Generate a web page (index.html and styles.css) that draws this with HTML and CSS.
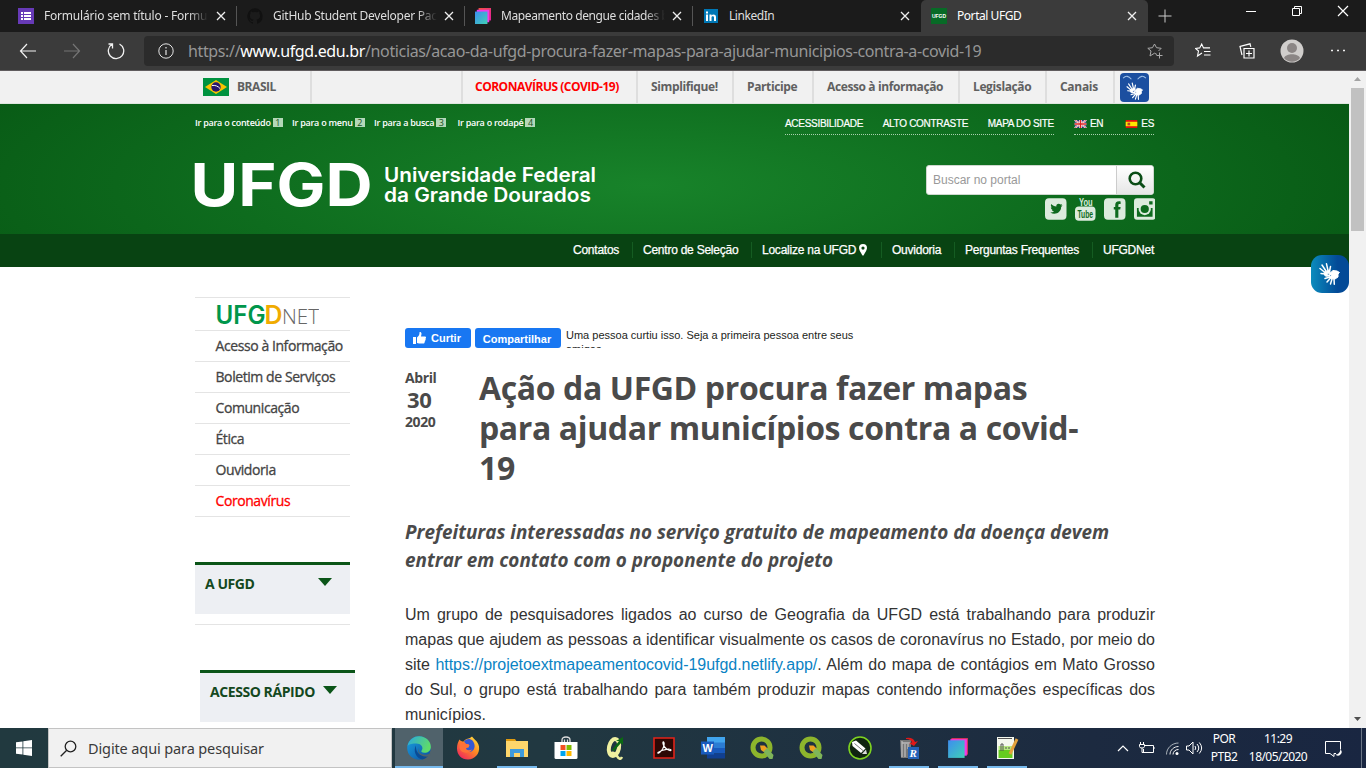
FILE: index.html
```html
<!DOCTYPE html>
<html lang="pt-BR">
<head>
<meta charset="utf-8">
<title>Portal UFGD</title>
<link rel="stylesheet" href="styles.css">
</head>
<body>
<svg class="defs" width="0" height="0">
  <defs>
    <linearGradient id="gEdge" x1="0" y1="0" x2="1" y2="0.4"><stop offset="0" stop-color="#2aa7e0"/><stop offset="1" stop-color="#5edb6a"/></linearGradient>
    <linearGradient id="gEdge2" x1="0" y1="0" x2="1" y2="1"><stop offset="0" stop-color="#1aa0e0"/><stop offset="1" stop-color="#0c4fa0"/></linearGradient>
    <linearGradient id="gFox" x1="1" y1="0" x2="0.2" y2="1"><stop offset="0" stop-color="#fff04a"/><stop offset="0.45" stop-color="#ff9021"/><stop offset="1" stop-color="#f0245f"/></linearGradient>
    <linearGradient id="gSq" x1="0" y1="0" x2="1" y2="1"><stop offset="0" stop-color="#3d8df0"/><stop offset="1" stop-color="#3fd0b5"/></linearGradient>
    <linearGradient id="gPk" x1="0" y1="0" x2="1" y2="1"><stop offset="0" stop-color="#f0503c"/><stop offset="1" stop-color="#e31fa0"/></linearGradient>
    <symbol id="squares" viewBox="0 0 20 20"><path fill="url(#gPk)" d="M5 1h14v14H5z"/><path fill="#f03bea" d="M3 3h14v14H3z"/><path fill="url(#gSq)" d="M1 5h14v14H1z"/></symbol>
    <symbol id="x" viewBox="0 0 10 10"><path d="M1 1l8 8M9 1L1 9" stroke="currentColor" stroke-width="1.3" fill="none"/></symbol>
    <symbol id="hands" viewBox="0 0 22 22"><g stroke="#fff" stroke-linecap="round" stroke-linejoin="round" fill="none"><path stroke-width="1.500" d="M6 9.500L1 5.500M7 8L3 2M9 7.500L7.500 .8M10.500 8.500L11.500 3.500M6 11L2 10.500"/><path fill="#fff" stroke-width="1" d="M5.500 9l5-2 .5 2.500-3 1.500 1 2-3-.5z"/><path fill="#fff" stroke-width="1" d="M10 11l4-3.500 4 .5 2.500 1.500-1.500 1.500v3l-3 2-4-.5-1-2 2-1.500z"/><path stroke-width="1.500" d="M11 14L6 15.500M11.500 15L8 19M13 16l-1.500 5M15 16l.3 5.200M10.500 12.500L7 13"/></g></symbol>
    <symbol id="qgis" viewBox="0 0 24 24"><circle cx="11.500" cy="11.500" r="8.500" fill="none" stroke="#8db52c" stroke-width="5"/><path d="M10 9.500l4.500 0 3.500 3.500-3.500 3.500-3.500-2.500z" fill="#f0a020"/><path d="M13.500 15.500l3.500-3.500 6.500 7-1 4h-3z" fill="#7fb55a"/></symbol>
  </defs>
</svg>

<div class="tabs">
  <div class="tab tab-first">
    <svg class="fav" viewBox="0 0 16 16"><path fill="#673ab7" d="M0 0h16v16H0z"/><path fill="#fff" d="M3 4h2v2H3zM6 4h7v2H6zM3 7h2v2H3zM6 7h7v2H6zM3 10h2v2H3zM6 10h7v2H6z"/></svg>
    <span class="tab-text fade t1">Formulário sem título - Formulários</span><svg class="close"><use href="#x"/></svg>
  </div>
  <div class="tab">
    <svg class="fav" viewBox="0 0 16 16"><path fill="#111" d="M8 .3a8 8 0 0 0-2.500 15.500c.4 0 .5-.2.5-.4v-1.500c-2.200.5-2.700-1-2.700-1-.4-.9-.9-1.200-.9-1.200-.7-.5.1-.5.1-.5.800 0 1.200.8 1.200.8.700 1.200 1.900.9 2.300.7.100-.5.300-.9.500-1.100-1.800-.2-3.600-.9-3.600-4 0-.9.300-1.600.8-2.100-.1-.2-.4-1 .1-2.100 0 0 .7-.2 2.200.8a7.500 7.500 0 0 1 4 0c1.500-1 2.200-.8 2.200-.8.400 1.100.2 1.900.1 2.100.5.500.8 1.200.8 2.100 0 3.100-1.900 3.800-3.700 4 .3.300.6.800.6 1.500v2.200c0 .2.100.5.500.4A8 8 0 0 0 8 .3z"/></svg>
    <span class="tab-text fade t2">GitHub Student Developer Pack</span><svg class="close"><use href="#x"/></svg>
  </div>
  <div class="tab">
    <svg class="fav" viewBox="1 1 18 18"><use href="#squares" width="20" height="20"/></svg>
    <span class="tab-text fade t3">Mapeamento dengue cidades brasil</span><svg class="close"><use href="#x"/></svg>
  </div>
  <div class="tab">
    <svg class="fav" viewBox="0 0 16 16"><path fill="#0077b5" d="M1 1h14v14H1z"/><path fill="#fff" d="M3 6.500h2V13H3zM3 3.500h2v2H3zM6.500 6.500h2v.9c1-1.600 4.500-1.500 4.500 1.600v4h-2V9.500c0-1.700-2.500-1.700-2.500 0V13h-2z"/></svg>
    <span class="tab-text t4">LinkedIn</span><svg class="close"><use href="#x"/></svg>
  </div>
  <div class="tab tab-active">
    <span class="fav fav-ufgd">UFGD</span>
    <span class="tab-text t5">Portal UFGD</span><svg class="close"><use href="#x"/></svg>
  </div>
  <svg class="newtab" viewBox="0 0 14 14"><path d="M7 .5v13M.5 7h13" stroke="#ccc" fill="none"/></svg>
  <div class="winbtns">
    <svg viewBox="0 0 12 12"><path d="M1 6.500h10" stroke="#fff"/></svg>
    <svg viewBox="0 0 12 12"><path d="M1.500 3.500h7v7h-7zM3.500 3V1.500h7v7H9" stroke="#fff" fill="none"/></svg>
    <svg viewBox="0 0 12 12"><path d="M1 1l10 10M11 1L1 11" stroke="#fff" stroke-width="1.200"/></svg>
  </div>
</div>

<div class="toolbar">
  <svg class="nav-ico" viewBox="0 0 18 18"><path d="M17 9H1.500M8 2L1.500 9 8 16" fill="none" stroke="#f2f2f2" stroke-width="1.200"/></svg>
  <svg class="nav-ico" viewBox="0 0 18 18"><path d="M1 9h15.500M10 2l6.500 7L10 16" fill="none" stroke="#757575" stroke-width="1.200"/></svg>
  <svg class="nav-ico" viewBox="0 0 18 18"><path d="M12.500 2A7.700 7.700 0 1 1 5 2.300M5.500 6.500V2H1.500" fill="none" stroke="#f2f2f2" stroke-width="1.300"/></svg>
  <div class="address">
    <svg class="info" viewBox="0 0 16 16"><circle cx="8" cy="8" r="7.200" fill="none" stroke="#e5e5e5"/><path d="M8 7v5M8 4v1.500" stroke="#e5e5e5" stroke-width="1.200"/></svg>
    <span class="url">https://<b>www.ufgd.edu.br</b>/noticias/acao-da-ufgd-procura-fazer-mapas-para-ajudar-municipios-contra-a-covid-19</span>
    <svg class="star" viewBox="0 0 16 16"><path d="M10 11.500l-2.500-1.300L3 13l1-5L.8 5.300l4.700-.6L7.500 1l2 3.700 4.700.6L11.500 8M12.500 9.500v6M9.500 12.500h6" fill="none" stroke="#aaa"/></svg>
  </div>
  <svg class="tool fav-list" viewBox="0 0 16 16"><path d="M7 10l-4.500 3 1-5L.5 5.500l4.200-.6L6.700 1l1.800 3.900H15M9 8.500h6.500M9 12h6.500" fill="none" stroke="#fff" stroke-width="1.100"/></svg>
  <svg class="tool" viewBox="0 0 16 16"><path d="M5 5.500h10v9.500H5zM10 7.500v6M7 10.500h6M3 12L1 3.500 11 .8l.8 3" fill="none" stroke="#fff" stroke-width="1.200"/></svg>
  <svg class="avatar" viewBox="0 0 24 24"><circle cx="12" cy="12" r="11.500" fill="#d0cecc"/><circle cx="12" cy="9" r="5" fill="#8b8685"/><path d="M4 19c2-5 14-5 16 0-4 5-12 5-16 0z" fill="#8b8685"/></svg>
  <svg class="tool dots" viewBox="0 0 16 16"><path d="M1 7.500h2M7 7.500h2M13 7.500h2" stroke="#eee" stroke-width="1.600"/></svg>
</div>

<div class="viewport">
  <div class="page">
    <div class="gov">
      <div class="gov-in">
        <div class="brasil">
          <svg viewBox="0 0 26 18"><path fill="#00923f" d="M0 0h26v18H0z"/><path fill="#f8c300" d="M13 2l11 7-11 7L2 9z"/><circle cx="13" cy="9" r="4.700" fill="#28166f"/><path d="M9 7.500c3-.5 6 .5 8 3" stroke="#fff" fill="none"/></svg>
          <b>BRASIL</b>
        </div>
        <div class="gov-gap"></div>
        <div class="gov-item covid">CORONAVÍRUS (COVID-19)</div>
        <div class="gov-item g2">Simplifique!</div>
        <div class="gov-item g3">Participe</div>
        <div class="gov-item g4">Acesso à informação</div>
        <div class="gov-item g5">Legislação</div>
        <div class="gov-item g6">Canais</div>
        <div class="vlibras"><svg viewBox="0 0 28 28"><path d="M3 5q4-4 8 1M25 5q-4-4-8 1" stroke="#9fc0e8" fill="none"/><use href="#hands" x="6" y="9" width="17" height="17"/></svg></div>
      </div>
    </div>

    <header>
      <div class="wrap head-top">
        <div class="skips">
          <span class="s1">Ir para o conteúdo <i>1</i></span><span class="s2">Ir para o menu <i>2</i></span><span class="s3">Ir para a busca <i>3</i></span><span>Ir para o rodapé <i>4</i></span>
        </div>
        <div class="access">
          <div class="dotted"><span>ACESSIBILIDADE</span><span>ALTO CONTRASTE</span><span>MAPA DO SITE</span></div>
          <div class="dotted langs">
            <svg viewBox="0 0 13 9"><path fill="#29357c" d="M0 0h13v9H0z"/><path d="M0 0l13 9M13 0L0 9" stroke="#fff" stroke-width="2"/><path d="M0 0l13 9M13 0L0 9" stroke="#d22" stroke-width=".7"/><path d="M6.500 0v9M0 4.500h13" stroke="#fff" stroke-width="3"/><path d="M6.500 0v9M0 4.500h13" stroke="#d22" stroke-width="1.600"/></svg><span class="en">EN</span>
            <svg viewBox="0 0 13 9"><path fill="#e01010" d="M0 0h13v9H0z"/><path fill="#ffe600" d="M0 2h13v5H0z"/><path fill="#b5452c" d="M2 3h3v3H2z"/></svg><span>ES</span>
          </div>
        </div>
      </div>
      <div class="wrap head-main">
        <svg class="logo" width="402" height="48" viewBox="0 0 402 48">
          <text class="logo-u" x="-4.500" y="44" textLength="182" lengthAdjust="spacingAndGlyphs">UFGD</text>
          <text class="logo-t" x="189" y="19.500" textLength="212" lengthAdjust="spacingAndGlyphs">Universidade Federal</text>
          <text class="logo-t" x="189" y="40" textLength="207" lengthAdjust="spacingAndGlyphs">da Grande Dourados</text>
        </svg>
        <div class="head-right">
          <div class="search"><span>Buscar no portal</span><div class="sbtn"><svg viewBox="0 0 18 18"><circle cx="7.500" cy="7.500" r="5.800" fill="none" stroke="#0b4d17" stroke-width="2.600"/><path d="M11.500 11.500l5 5" stroke="#0b4d17" stroke-width="3"/></svg></div></div>
          <div class="social">
            <svg viewBox="0 0 22 22"><rect width="22" height="22" rx="4" fill="#dcebdd"/><path fill="#0e6a1e" d="M16.500 7.300l1-1.500-1.600.6c-2-1.800-4.800-.3-4.300 2-2 0-3.900-1-5.200-2.600-.8 1.400-.3 2.800.8 3.600l-1.200-.3c0 1.300.9 2.300 2.100 2.700H7c.4 1 1.300 1.600 2.300 1.700-1.100.9-2.500 1.200-3.900 1.100 5.100 3.100 11.200-.2 11.100-5.700l1.500-1.600z"/></svg>
            <svg class="yt" viewBox="0 0 22 25"><rect x="0" y="10.500" width="21" height="14.500" rx="4" fill="#dcebdd"/><text class="yt-you" x="4" y="9.500" textLength="14" lengthAdjust="spacingAndGlyphs">You</text><text class="yt-tube" x="2.500" y="22" textLength="16" lengthAdjust="spacingAndGlyphs">Tube</text></svg>
            <svg viewBox="0 0 22 22"><rect width="22" height="22" rx="4" fill="#dcebdd"/><path fill="#0e6a1e" d="M11.500 20v-8.500H10V9h1.500V7c0-3 1.500-4.300 5.500-3.800V6c-1.800-.2-2.300 0-2.300 1.300V9H17l-.4 2.500h-1.900V20z"/></svg>
            <svg viewBox="0 0 22 22"><rect width="22" height="22" rx="3" fill="#dcebdd"/><path fill="#0e6a1e" d="M15.500 3H19v3.500h-3.500zM3 10h16v9H3z"/><circle cx="11" cy="11" r="6.300" fill="#dcebdd"/><circle cx="11" cy="11" r="4.200" fill="#0e6a1e"/></svg>
          </div>
        </div>
      </div>
      <div class="menu"><div class="wrap menu-in">
        <span class="m1">Contatos</span><span class="m2">Centro de Seleção</span><span class="m3">Localize na UFGD <svg viewBox="0 0 8 12"><path fill="#fff" fill-rule="evenodd" d="M4 0a4 4 0 0 1 4 4c0 2-2.500 6-4 8-1.500-2-4-6-4-8a4 4 0 0 1 4-4zm0 2.500a1.600 1.600 0 1 0 0 3.200 1.600 1.600 0 0 0 0-3.200z"/></svg></span><span class="m4">Ouvidoria</span><span class="m5">Perguntas Frequentes</span><span class="m6">UFGDNet</span>
      </div></div>
    </header>

    <div class="wrap content">
      <aside>
        <ul>
          <li class="net"><svg width="103" height="21" viewBox="0 0 103 21"><text class="net-b" x="-.5" y="18.500" textLength="50" lengthAdjust="spacingAndGlyphs" fill="#00964b">UFG</text><text class="net-b" x="48.500" y="18.500" textLength="18" lengthAdjust="spacingAndGlyphs" fill="#f0ab00">D</text><text class="net-t" x="66" y="18.500" textLength="37" lengthAdjust="spacingAndGlyphs">NET</text></svg></li>
          <li>Acesso à Informação</li><li>Boletim de Serviços</li><li>Comunicação</li><li>Ética</li><li>Ouvidoria</li><li class="red">Coronavírus</li>
        </ul>
        <div class="box"><span>A UFGD</span><i class="tri tri-a"></i></div>
        <div class="rule"></div>
        <div class="box box-b"><span>ACESSO RÁPIDO</span><i class="tri"></i></div>
      </aside>
      <main>
        <div class="fb">
          <span class="fb-btn like"><svg viewBox="0 0 13 12"><path fill="#fff" d="M0 5h3v7H0zM4 5.500C6 4 6.500 2.500 6.500.5c0-.8 2.200-.5 2 1.500L8 4.500h4c1.200 0 1.300 1.500.5 2 .5.700.2 1.500-.3 1.800.3.700 0 1.300-.6 1.500.2 1-.3 1.700-1.300 1.700H6L4 11z"/></svg>Curtir</span>
          <span class="fb-btn share">Compartilhar</span>
          <span class="fb-text">Uma pessoa curtiu isso. Seja a primeira pessoa entre seus amigos.</span>
        </div>
        <div class="title">
          <div class="date"><div>Abril</div><div class="day">30</div><div class="year">2020</div></div>
          <h1>Ação da UFGD procura fazer mapas<br>para ajudar municípios contra a covid-<br>19</h1>
        </div>
        <h2>Prefeituras interessadas no serviço gratuito de mapeamento da doença devem<br>entrar em contato com o proponente do projeto</h2>
        <p>Um grupo de pesquisadores ligados ao curso de Geografia da UFGD está trabalhando para produzir mapas que ajudem as pessoas a identificar visualmente os casos de coronavírus no Estado, por meio do site <a>https://projetoextmapeamentocovid-19ufgd.netlify.app/</a>. Além do mapa de contágios em Mato Grosso do Sul, o grupo está trabalhando para também produzir mapas contendo informações específicas dos municípios.</p>
      </main>
    </div>
    <div class="float-libras"><svg viewBox="0 0 22 22"><use href="#hands" width="22" height="22"/></svg></div>
  </div>
  <div class="scroll">
    <svg viewBox="0 0 17 16"><path fill="#a3a3a3" d="M5 10l3.500-4 3.500 4z"/></svg>
    <div class="thumb"></div>
    <svg class="down" viewBox="0 0 17 16"><path fill="#505050" d="M5 5h7L8.500 9z"/></svg>
  </div>
</div>

<div class="taskbar">
  <div class="start"><svg viewBox="0 0 16 16"><path fill="#fff" d="M0 2.300l6.500-.9v6.100H0zM7.300 1.300L16 0v7.500H7.300zM0 8.300h6.500v6.200L0 13.700zM7.300 8.300H16V16l-8.700-1.300z"/></svg></div>
  <div class="tsearch"><svg viewBox="0 0 17 17"><circle cx="10.500" cy="6.500" r="5.300" fill="none" stroke="#222" stroke-width="1.300"/><path d="M6.700 10.300L.7 16.300" stroke="#222" stroke-width="1.300"/></svg><span>Digite aqui para pesquisar</span></div>
  <div class="apps">
    <div class="app on"><svg viewBox="0 0 24 24"><circle cx="12" cy="12" r="11.800" fill="url(#gEdge2)"/><path fill="url(#gEdge)" d="M.5 10C2 3.500 7 .2 12 .2 19 .2 24 5.500 23.900 11c-.1 4-3.400 6-6.500 5.800-2.700-.1-3.400-1.100-3-1.800 3-4-1-7.500-4.900-7.500C6 7.500 2 8 .5 10z"/><path fill="#0b4b94" d="M9 9.500c-3 5-.5 12.500 6.500 14 3-.9 5.400-2.800 6.800-5.300-6 3-14 1-13.300-8.700z"/><path fill="#50626b" d="M11.500 11.500c-1.500 5 4 9 10.500 6.500 1.500-.5 2 .3.500 2-.5.500-3 .8-4.500.6-5-.6-8.500-4.600-6.500-9.100z"/></svg></div>
    <div class="app"><svg viewBox="0 0 24 24"><path fill="url(#gFox)" d="M3.500 3.500C4.500 5 6 5.500 7.500 5.500 9 3 12 2.500 14 2c1.500-1.500 2-1.500 2.500-1 1 2 5.500 4 6.500 9.500C24 18 18.500 23.500 12 23.500 5.500 23.500 1 19 1 12.500 1 8.500 2 6 3.500 3.500z"/><path fill="#3459d4" d="M8 5.500c2-3 6-3.500 8.500-1 3 3.500 3 9-1 11-4 1.500-7-1-7.500-3l4.500-1 1-2.500-3.500-.5z"/><path fill="#ff7139" d="M4 7c3-1.500 5-.5 6 1 2 0 3.500 0 3 1.500l-3 2c0 3.500 3.500 3 6 2-1.500 4-11.500 5-12.500-2z"/></svg></div>
    <div class="app open"><svg viewBox="0 0 24 24"><path fill="#e09b10" d="M1 3h9l2 3H1z"/><path fill="#ffd66b" d="M1 5h22v16H1z"/><path fill="#3f9bdc" d="M5 13h14v8h-4v-4H9v4H5z"/></svg></div>
    <div class="app"><svg viewBox="0 0 24 24"><path d="M8 7V4q0-3 4-3t4 3v3M10.500 7V3.500M13.500 7V3.500" stroke="#ddd" fill="none" stroke-width="1.300"/><path fill="#fff" d="M.5 6h23v15.500q0 1.500-1.500 1.500H2q-1.500 0-1.500-1.500z"/><path fill="#f25022" d="M6.500 9h5v5h-5z"/><path fill="#7fba00" d="M12.500 9h5v5h-5z"/><path fill="#00a4ef" d="M6.500 15h5v5h-5z"/><path fill="#ffb900" d="M12.500 15h5v5h-5z"/></svg></div>
    <div class="app"><svg viewBox="0 0 24 24"><ellipse cx="11" cy="11.500" rx="5" ry="8.500" transform="rotate(12 11 11.500)" fill="none" stroke="#eff0a0" stroke-width="4"/><path d="M7 18q4-3 7 2t5 1" stroke="#eff0a0" stroke-width="2.500" fill="none"/><path d="M9 14l7-9-3 0 7-4v8l-2-2-7 8z" fill="#0b6a12"/></svg></div>
    <div class="app"><svg viewBox="0 0 24 24"><path fill="#2d0805" stroke="#e2231a" stroke-width="1.600" d="M2 2h20v20H2z"/><path d="M6 16.500c-1 2.500 5-2 6-7 .8-4-1.500-5-1-2 .8 5 7.500 8.500 8 6.500.2-1.500-8-1-13 2.500z" stroke="#fff" stroke-width="1.200" fill="none"/></svg></div>
    <div class="app"><svg viewBox="0 0 24 24"><path fill="#41a5ee" d="M6 1h18v6H6z"/><path fill="#2b7cd3" d="M6 6.500h18V12H6z"/><path fill="#185abd" d="M6 12h18v5.500H6z"/><path fill="#103f91" d="M6 17.500h18v5H6z"/><path fill="#185abd" d="M0 5.500h13v13H0z"/><text class="wordw" x="1.500" y="16">W</text></svg></div>
    <div class="app"><svg><use href="#qgis"/></svg></div>
    <div class="app"><svg><use href="#qgis"/></svg></div>
    <div class="app"><svg viewBox="0 0 24 24"><circle cx="12" cy="12" r="11" fill="#102410" stroke="#7ed321" stroke-width="1.600"/><path fill="#fff" d="M4 6l4-1.500 9.500 8-4.500 4.500L4.500 10z"/><path fill="#ddd" d="M18 13.500l1 4.500-5 0z"/><path d="M6.500 7.500l9 7.500" stroke="#777"/></svg></div>
    <div class="app open"><svg viewBox="0 0 24 24"><path fill="#777" d="M3 4h11v18H4z"/><path d="M5 7h8M5 5v16M8 8v13M11 8v5" stroke="#bbb" stroke-width="1.300"/><path fill="#2563b8" d="M11 11h11v12H11z"/><path d="M9 2q7-1 9 4l3-1-4 5-5-3 3-.5Q14 3 9 3z" fill="#e01818"/><text class="rr" x="12.500" y="20.500">R</text></svg></div>
    <div class="app open"><svg class="sq" viewBox="0 0 20 20"><path fill="#e6355f" d="M4 1h15v15H4z"/><path fill="#f03bea" d="M3 2h15v15H3z"/><path fill="url(#gSq)" d="M1 3h15v16H1z"/></svg></div>
    <div class="app open"><svg viewBox="0 0 24 24"><path fill="#f5f8ef" d="M2 1h17v22H2z"/><path fill="#65cc20" d="M3.500 14h14v8h-14z"/><path fill="#b7ea80" d="M3.500 10h14v4h-14z"/><path d="M3 2.500h14M6 8v7M8 8v7M6 8h2M10 12h2M13 12h2" stroke="#555" fill="none"/><path d="M22 3l-7 15" stroke="#e4a23c" stroke-width="3"/></svg></div>
  </div>
  <div class="tray">
    <svg class="chev" viewBox="0 0 12 8"><path d="M1 7l5-5 5 5" stroke="#fff" stroke-width="1.200" fill="none"/></svg>
    <svg class="bat" viewBox="0 0 16 14"><path d="M6 4.500h8.500v7H4.500V8M14.500 7H16M1.500 1v2M4.500 1v2M.5 3.500h5v2q0 1.500-2.500 1.500t-2.500-1.500zM3 7v4.500h2" stroke="#fff" fill="none"/></svg>
    <svg class="wifi" viewBox="0 0 13 13"><g fill="none" stroke="#aab2ba"><path d="M.5 12.500C.5 6 6 1 12.500 1"/><path d="M4 12.500C4 8 8 4.500 12.500 4.500" stroke="#eee"/><path d="M7 12.500C7 9.500 9.500 7.500 12.500 7.500" stroke="#fff"/></g><circle cx="11" cy="11.500" r="1.500" fill="#fff"/></svg>
    <svg class="vol" viewBox="0 0 17 14"><path d="M.5 5h2.500l4-4v12l-4-4H.5zM9 5q1.500 2 0 4M11 3q3.500 4 0 8M13.300 1.500q4.700 5.500 0 11" stroke="#fff" fill="none"/></svg>
    <div class="lang"><span>POR</span><span>PTB2</span></div>
    <div class="clock"><span>11:29</span><span>18/05/2020</span></div>
    <svg class="note" viewBox="0 0 17 17"><path d="M5 13.500H.5V1.500h15v8M5 13.500l4 3v-3h2" stroke="#fff" fill="none"/><path fill="#fff" d="M15.500 9.500a3.500 3.500 0 1 1-5 5q4 0 5-5z"/></svg>
    <div class="peek"></div>
  </div>
</div>
</body>
</html>
```
FILE: styles.css
```css
* { box-sizing: border-box; }
body { margin: 0; width: 1366px; height: 768px; overflow: hidden; display: flex; flex-direction: column; background: #fff; font-family: "Open Sans", sans-serif; }
svg { display: block; flex: none; }
.defs { position: absolute; }

/* Browser tabs */
.tabs { height: 32px; background: #1b1b1b; display: flex; flex: none; color: #dedede; font-family: "Noto Sans", sans-serif; font-size: 12px; }
.tab { width: 228px; height: 32px; display: flex; align-items: center; padding: 0 11px 0 10px; position: relative; }
.tab-first { width: 237px; padding-left: 18px; }
.tab:not(.tab-active)::after { content: ""; position: absolute; right: 0; top: 6px; width: 1px; height: 20px; background: #555; }
.tab:nth-child(4)::after { display: none; }
.tab-active { width: 227px; background: #3b3b3b; border-radius: 5px 5px 0 0; color: #fff; }
.fav { width: 16px; height: 16px; flex: none; }
.fav-ufgd { background: #076a26; font: bold 5px/16px "Liberation Sans", sans-serif; text-align: center; }
.tab-text { margin-left: 10px; width: 164px; white-space: nowrap; overflow: hidden; line-height: 18px; flex: none; }
.fade { -webkit-mask-image: linear-gradient(90deg, #000 88%, transparent); mask-image: linear-gradient(90deg, #000 88%, transparent); }
.t1 { letter-spacing: -.2px; }
.t2 { letter-spacing: -.25px; }
.t3 { letter-spacing: -.4px; }
.t4, .t5 { letter-spacing: -.45px; }
.close { width: 10px; height: 10px; margin-left: auto; color: #eee; }
.newtab { width: 14px; height: 14px; margin: 9px 0 0 10px; }
.winbtns { margin-left: auto; display: flex; gap: 34px; padding: 5px 17px 0 0; }
.winbtns svg { width: 12px; height: 12px; }

/* Address bar */
.toolbar { height: 39px; background: #3b3b3b; border-bottom: 1px solid #605c5e; display: flex; align-items: center; flex: none; padding-left: 19px; }
.nav-ico { width: 18px; height: 18px; margin-right: 26px; }
.address { width: 1030px; height: 30px; margin-left: -7px; background: #2b2b2b; border-radius: 4px; display: flex; align-items: center; padding: 0 11px 0 14px; }
.info { width: 16px; height: 16px; }
.url { font: 16px/24px "Noto Sans", sans-serif; color: #969696; margin-left: 14px; letter-spacing: -.365px; white-space: nowrap; }
.url b { font-weight: 400; color: #fff; }
.star { width: 16px; height: 16px; margin-left: auto; }
.tool { width: 16px; height: 16px; margin-left: 28px; }
.fav-list { margin-left: 21px; }
.avatar { width: 24px; height: 24px; margin-left: 25px; }
.dots { margin-left: 26px; }

/* Page area */
.viewport { height: 657px; display: flex; flex: none; }
.page { width: 1349px; height: 657px; overflow: hidden; position: relative; }
.wrap { width: 960px; margin-left: 195px; }
.gov { height: 33px; background: #f1f1f1; border-bottom: 1px solid #dfe6df; }
.gov-in { margin-left: 203px; display: flex; height: 32px; font-size: 12px; line-height: 32px; color: #606060; letter-spacing: -.15px; }
.brasil { width: 109px; border-right: 2px solid #dedede; display: flex; align-items: center; gap: 8px; }
.brasil svg { width: 26px; height: 18px; }
.brasil b { font-weight: 700; letter-spacing: -.45px; }
.gov-gap { width: 149px; }
.gov-item { border-left: 2px solid #dedede; padding-left: 13px; white-space: nowrap; font-weight: 700; letter-spacing: -.38px; }
.covid { color: #f00; width: 175px; font-weight: 700; letter-spacing: -.5px; padding-left: 12px; }
.g2 { width: 96px; } .g3 { width: 80px; } .g4 { width: 146px; } .g5 { width: 87px; } .g6 { width: 68px; letter-spacing: -.3px; }
.vlibras { border-left: 2px solid #dedede; padding: 2px 0 0 5px; }
.vlibras svg { width: 29px; height: 29px; background: #1c4fa0; border-radius: 4px; }

header { height: 163px; background: radial-gradient(ellipse 760px 190px at 48% 50%, #18832a 0, #0e6c1e 55%, #085a15 100%); display: flex; flex-direction: column; }
.head-top { display: flex; justify-content: space-between; height: 58px; padding-top: 12px; color: #fff; }
.skips { display: flex; height: 13px; font-size: 9px; line-height: 13px; letter-spacing: -.26px; font-weight: 600; }
.skips span { display: flex; align-items: center; gap: 2px; white-space: nowrap; }
.s1 { width: 97px; } .s2 { width: 82px; } .s3 { width: 83.500px; }
.skips i { font-style: normal; font-weight: 400; width: 10px; height: 9px; line-height: 9px; background: #b4d8b8; color: #174f20; text-align: center; }
.access { display: flex; gap: 20px; font: 10px/15px "Liberation Sans", sans-serif; letter-spacing: -.3px; white-space: nowrap; margin-right: 1px; -webkit-text-stroke: .2px #fff; }
.dotted { display: flex; height: 19px; border-bottom: 1px dotted #a9d0ad; width: 269px; justify-content: space-between; }
.langs { width: 80px; justify-content: flex-start; align-items: center; padding-bottom: 3px; gap: 3px; }
.langs svg { width: 13px; height: 8px; }
.en { margin-right: 19px; }
.head-main { display: flex; justify-content: space-between; height: 72px; }
.logo { overflow: visible; }
.logo-u { font: bold 59px Inter, sans-serif; fill: #fff; }
.logo-t { font: 600 20px Inter, sans-serif; fill: #fff; }
.head-right { width: 229px; padding-top: 3px; }
.search { width: 228px; height: 30px; background: #fff; border-radius: 3px; border: 1px solid #cfd8cf; display: flex; font: 12px/28px "Liberation Sans", sans-serif; color: #999; padding-left: 6px; justify-content: space-between; overflow: hidden; }
.sbtn { width: 37px; border-left: 1px solid #ccc; background: linear-gradient(#fff, #e6e6e6); padding: 5px 0 0 11px; }
.sbtn svg { width: 18px; height: 18px; }
.social { display: flex; justify-content: flex-end; align-items: center; gap: 8px; width: 229px; margin-top: 1px; height: 25px; }
.social svg { width: 21.500px; height: 22px; }
.social .yt { width: 21.500px; height: 25px; }
.yt-you { font: bold 12px "Liberation Sans", sans-serif; fill: #dcebdd; }
.yt-tube { font: bold 12px "Liberation Sans", sans-serif; fill: #0e6a1e; }
.menu { height: 33px; background: #084312; }
.menu-in { display: flex; justify-content: flex-end; align-items: center; height: 32px; color: #fff; font: 12px/16px "Liberation Sans", sans-serif; letter-spacing: -.24px; white-space: nowrap; }
.menu-in span { border-left: 1px solid #155c22; padding-left: 10px; display: flex; align-items: center; gap: 3px; -webkit-text-stroke: .25px #fff; }
.menu-in .m1 { width: 59px; border: 0; padding: 0; }
.m2 { width: 119px; } .m3 { width: 130px; } .m4 { width: 73px; } .m5 { width: 138px; } .m6 { width: 63px; }
.menu-in svg { width: 8px; height: 12px; }

/* Sidebar */
.content { display: flex; padding-top: 30px; }
aside { width: 160px; }
ul { list-style: none; margin: 0; padding: 0; width: 155px; border-top: 1px solid #e4e4e4; }
li { height: 31px; border-bottom: 1px solid #e4e4e4; padding-left: 20.500px; font-size: 14px; line-height: 30px; letter-spacing: -.42px; color: #444; white-space: nowrap; -webkit-text-stroke: .3px; }
.net { height: 33px; padding-top: 7px; }
.net-b { font: 600 25px Inter, sans-serif; stroke: none; letter-spacing: 0; -webkit-text-stroke: 0; }
.net-t { font: 300 20px "Open Sans", sans-serif; fill: #666; letter-spacing: 0; -webkit-text-stroke: 0; }
.red { color: #f00; }
.box { width: 155px; height: 52px; margin-top: 45px; border-top: 3px solid #0b5518; background: #edeff3; padding: 9px 0 0 10px; display: flex; font-size: 14px; line-height: 19px; font-weight: 700; letter-spacing: -.43px; color: #14481e; white-space: nowrap; }
.tri { border: 7px solid transparent; border-top: 8px solid #0b5518; border-bottom: 0; height: 0; margin: 4px 0 0 8px; }
.tri-a { margin-left: auto; margin-right: 18px; }
.rule { height: 11px; width: 155px; border-bottom: 1px solid #e4e4e4; }
.box-b { margin-left: 5px; }

/* Article */
main { width: 750px; margin-left: 50px; padding-top: 31px; flex: none; color: #4a4a4a; }
.fb { display: flex; height: 20px; overflow: hidden; gap: 4px; font-family: "Liberation Sans", sans-serif; }
.fb-btn { background: #1877f2; border-radius: 3px; color: #fff; font-weight: 700; font-size: 11px; line-height: 20px; height: 20px; display: flex; align-items: center; white-space: nowrap; }
.like { width: 66px; padding-left: 8px; gap: 5px; }
.like svg { width: 13px; height: 12px; }
.share { width: 86px; justify-content: center; padding: 2px 2px 0 0; }
.fb-text { font-size: 11px; line-height: 14px; width: 300px; color: #1c1e21; margin-left: 1px; }
.title { display: flex; margin-top: 20px; }
.date { width: 74px; font-weight: 700; font-size: 14px; line-height: 20px; letter-spacing: -.4px; }
.day { font-size: 22px; line-height: 22px; padding-left: 2px; }
.year { line-height: 24px; }
h1 { margin: 0; font-size: 32px; line-height: 40px; font-weight: 700; letter-spacing: -.38px; white-space: nowrap; }
h2 { margin: 30px 0 0; font-size: 18.900px; line-height: 28px; font-style: italic; font-weight: 700; white-space: nowrap; }
p { margin: 28px 0 0; font: 16px/25px "Liberation Sans", sans-serif; text-align: justify; color: #333; }
a { color: #0a83c4; letter-spacing: -.04px; }
.float-libras { position: absolute; right: 0; top: 184px; width: 38px; height: 38px; border-radius: 11px; background: linear-gradient(90deg, #0b8cbd, #034a97 70%); padding: 8px; }
.float-libras svg { width: 22px; height: 22px; }
.scroll { width: 17px; height: 657px; background: #f1f1f1; display: flex; flex-direction: column; align-items: center; }
.scroll svg { width: 17px; height: 16px; }
.thumb { width: 13px; height: 143px; background: #c1c1c1; margin-top: 1px; }
.down { margin-top: auto; }

/* Taskbar */
.taskbar { height: 40px; background: linear-gradient(90deg, #21393f, #213841 40%, #1c2a40 80%, #192641); display: flex; flex: none; color: #fff; }
.start { width: 48px; padding: 12px 0 0 16px; }
.start svg { width: 16px; height: 16px; }
.tsearch { width: 344px; background: #f1f1f1; border: 1px solid #c3c3c3; display: flex; align-items: center; padding-left: 11px; gap: 11px; color: #3a3a3a; font: 14.500px/20px "Noto Sans", sans-serif; letter-spacing: -.12px; white-space: nowrap; }
.tsearch svg { width: 17px; height: 17px; }
.apps { display: flex; gap: 1px; margin-left: 3px; }
.app { width: 48px; height: 40px; padding: 8px 12px 0; position: relative; }
.app svg { width: 24px; height: 24px; }
.app .sq { width: 22px; height: 22px; margin: 1px; }
.on { background: #50626b; border-bottom: 2px solid #76b9ed; }
.open::after { content: ""; position: absolute; left: 4px; right: 4px; bottom: 0; height: 2px; background: #76b9ed; }
.wordw { font: bold 11px "Liberation Sans", sans-serif; fill: #fff; }
.rr { font: italic bold 11px "Liberation Serif", serif; fill: #fff; }
.tray { margin-left: auto; display: flex; align-items: center; font: 12px/18px "Noto Sans", sans-serif; letter-spacing: -.55px; }
.chev { width: 12px; height: 8px; }
.bat { width: 16px; height: 14px; margin-left: 10px; }
.wifi { width: 13px; height: 13px; margin-left: 11px; }
.vol { width: 17px; height: 14px; margin-left: 7px; }
.lang { width: 28px; margin-left: 7px; display: flex; flex-direction: column; text-align: center; white-space: nowrap; }
.clock { width: 60px; margin-left: 10px; display: flex; flex-direction: column; text-align: center; white-space: nowrap; }
.note { width: 17px; height: 17px; margin-left: 17px; }
.peek { width: 1px; height: 40px; background: #6a7585; margin: 0 4px 0 19px; }
```
